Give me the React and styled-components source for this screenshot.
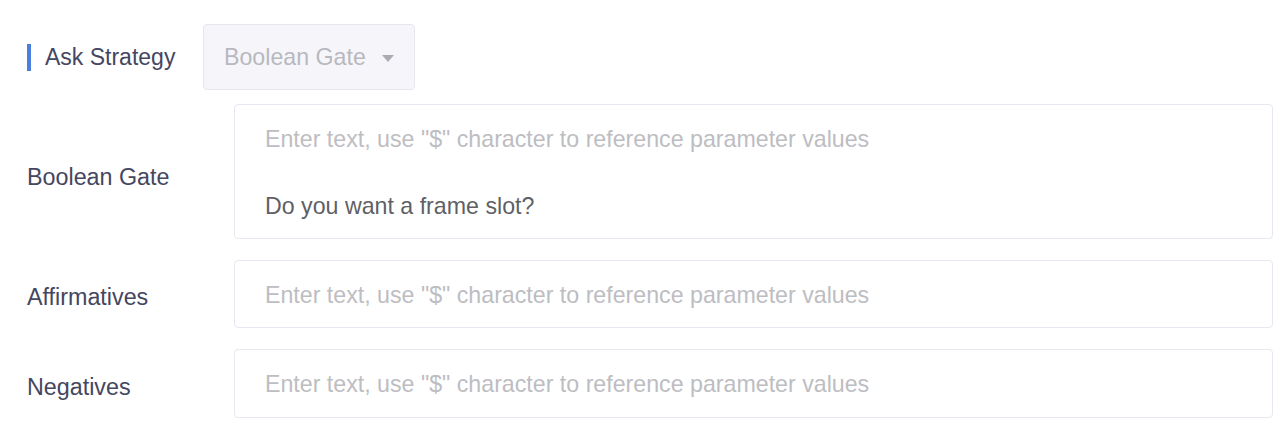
import styled, { createGlobalStyle } from "styled-components";

const Global = createGlobalStyle`
    body {
        margin: 0;
        background: #fff;
        font-family: "Liberation Sans", Arial, sans-serif;
    }
`

// PAGINA
const Formulario = styled.div`
    padding: 24px 7px 0 27px;
    display: flex;
    flex-direction: column;
`

// LINHA ESTRATEGIA
const LinhaEstrategia = styled.div`
    display: flex;
    align-items: center;
    margin-bottom: 14px;
`

const TituloEstrategia = styled.div`
    display: flex;
    align-items: center;
    width: 176px;
    font-size: 23px;
    color: #45465f;
    padding-top: 1px;
    &::before {
        content: "";
        width: 4px;
        height: 27px;
        background: #4a7fe0;
        margin-right: 14px;
    }
`

const Seletor = styled.div`
    width: 212px;
    height: 66px;
    box-sizing: border-box;
    background: #f6f6fa;
    border: 1px solid #e6e6ef;
    border-radius: 4px;
    display: flex;
    align-items: center;
    padding: 0 20px;
    gap: 16px;
    font-size: 23.2px;
    color: #b8b8bf;
`

const Seta = styled.span`
    width: 0;
    height: 0;
    border-left: 6px solid transparent;
    border-right: 6px solid transparent;
    border-top: 7px solid #ababb2;
    margin-top: 3px;
`

// LINHAS DE CAMPOS
const Linha = styled.div`
    display: grid;
    grid-template-columns: 207px 1fr;
    align-items: center;
    margin-bottom: ${props => props.$espaco}px;
`

const Rotulo = styled.div`
    font-size: 23.3px;
    line-height: 26px;
    color: #45465f;
    padding-top: ${props => props.$desce}px;
`

const Caixa = styled.div`
    box-sizing: border-box;
    height: ${props => props.$altura}px;
    border: 1px solid #e7e7f0;
    border-radius: 4px;
    padding: 21px 30px 0 30px;
    display: flex;
    flex-direction: column;
    gap: 41px;
    font-size: 23.2px;
`

const Dica = styled.div`
    color: #bdbdc2;
    line-height: 26px;
`

const Valor = styled.div`
    color: #5f5f66;
    line-height: 26px;
`

const dica = 'Enter text, use "$" character to reference parameter values'

function App() {
    return (
        <>
            <Global />
            <Formulario>
                <LinhaEstrategia>
                    <TituloEstrategia>Ask Strategy</TituloEstrategia>
                    <Seletor>
                        Boolean Gate
                        <Seta />
                    </Seletor>
                </LinhaEstrategia>

                <Linha $espaco={21}>
                    <Rotulo $desce={10}>Boolean Gate</Rotulo>
                    <Caixa $altura={135}>
                        <Dica>{dica}</Dica>
                        <Valor>Do you want a frame slot?</Valor>
                    </Caixa>
                </Linha>

                <Linha $espaco={21}>
                    <Rotulo $desce={6}>Affirmatives</Rotulo>
                    <Caixa $altura={68}>
                        <Dica>{dica}</Dica>
                    </Caixa>
                </Linha>

                <Linha $espaco={0}>
                    <Rotulo $desce={7}>Negatives</Rotulo>
                    <Caixa $altura={69}>
                        <Dica>{dica}</Dica>
                    </Caixa>
                </Linha>
            </Formulario>
        </>
    )
}

export default App
